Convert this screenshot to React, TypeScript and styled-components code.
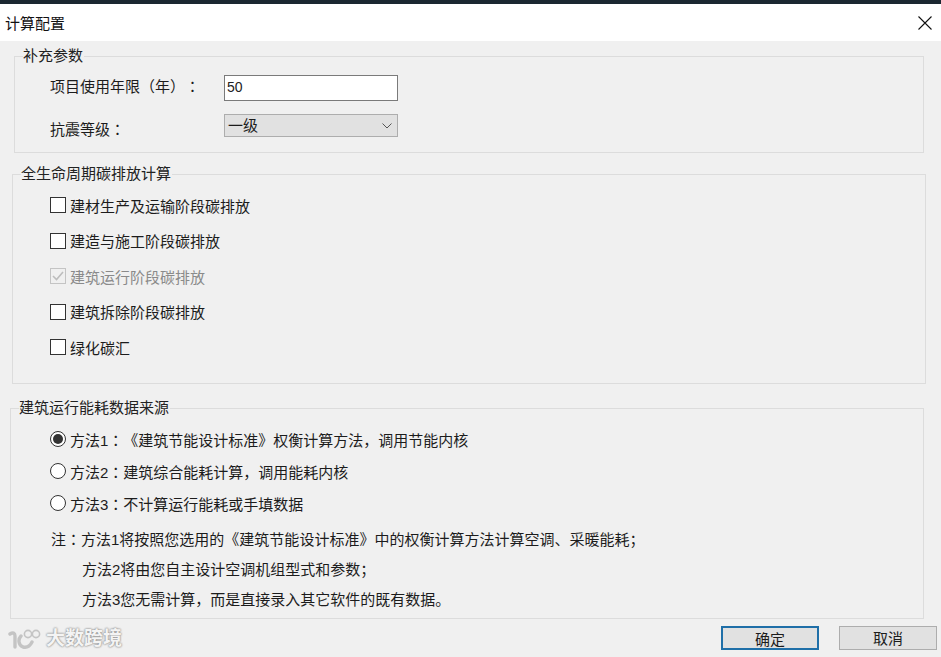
import styled, { createGlobalStyle } from "styled-components";

const GlobalStyle = createGlobalStyle`
  html, body {
    margin: 0;
    padding: 0;
    background: #f0f0f0;
  }
  body {
    font-family: "Liberation Sans", "Noto Sans CJK SC", sans-serif;
    font-size: 15px;
    color: #1c1c1c;
    text-spacing-trim: space-all;
  }
`;

const Dialog = styled.div`
  position: relative;
  width: 941px;
  height: 657px;
  overflow: hidden;
  background: #f0f0f0;
  border-top: 4px solid #1b2731;
  box-sizing: border-box;
`;

const TitleBar = styled.header`
  height: 37px;
  background: #fff;
  display: flex;
  align-items: center;
  justify-content: space-between;
  padding: 0 9px 0 5px;
`;

const Title = styled.h1`
  margin: 0;
  font-size: 15px;
  font-weight: 400;
  color: #111;
`;

const Close = styled.svg`
  width: 14px;
  height: 14px;
`;

const Group = styled.fieldset<{ $left: number; $right: number; $top: number; $height: number }>`
  margin: ${(p) => p.$top}px ${(p) => p.$right}px 0 ${(p) => p.$left}px;
  height: ${(p) => p.$height}px;
  padding: 0;
  border: 1px solid #dcdcdc;
  box-sizing: border-box;
  min-width: 0;
`;

const Legend = styled.legend<{ $inset: number }>`
  margin-left: ${(p) => p.$inset}px;
  padding: 0 1px 0 0;
  line-height: 20px;
  color: #222;
`;

const FormRow = styled.div<{ $top: number; $height: number }>`
  display: flex;
  align-items: center;
  height: ${(p) => p.$height}px;
  margin-top: ${(p) => p.$top}px;
  padding-left: 36px;
`;

const FieldLabel = styled.label<{ $shift: number }>`
  width: 173px;
  flex: none;
  padding-top: ${(p) => Math.max(p.$shift, 0)}px;
  padding-bottom: ${(p) => Math.max(-p.$shift, 0)}px;
  margin-left: -1px;
  margin-right: 1px;
`;

const TextInput = styled.input`
  width: 174px;
  height: 26px;
  box-sizing: border-box;
  border: 1px solid #7a7a7a;
  background: #fff;
  padding: 0 2px 2px;
  font: inherit;
  font-size: 14px;
  color: #222;
  outline: none;
`;

const SelectBox = styled.div`
  width: 174px;
  height: 23px;
  box-sizing: border-box;
  border: 1px solid #adadad;
  background: #e1e1e1;
  display: flex;
  align-items: center;
  justify-content: space-between;
  padding: 0 5px 3px 3px;
`;

const Chevron = styled.svg`
  width: 10px;
  height: 6px;
  margin-top: 3px;
`;

const OptionList = styled.div<{ $top: number; $gap: number; $left: number }>`
  display: flex;
  flex-direction: column;
  gap: ${(p) => p.$gap}px;
  padding: ${(p) => p.$top}px 0 0 ${(p) => p.$left}px;
`;

const Option = styled.label<{ $disabled?: boolean }>`
  height: 20px;
  display: flex;
  align-items: center;
  gap: 4px;
  color: ${(p) => (p.$disabled ? "#8a8a8a" : "#1c1c1c")};
`;

const CheckBox = styled.span<{ $disabled?: boolean }>`
  width: 16px;
  height: 16px;
  box-sizing: border-box;
  flex: none;
  background: ${(p) => (p.$disabled ? "#f0f0f0" : "#fff")};
  border: 1px solid ${(p) => (p.$disabled ? "#c4c4c4" : "#333")};
  display: flex;
  align-items: center;
  justify-content: center;
`;

const Tick = styled.svg`
  width: 12px;
  height: 10px;
`;

const Radio = styled.span<{ $checked?: boolean }>`
  width: 16px;
  height: 16px;
  box-sizing: border-box;
  flex: none;
  border-radius: 50%;
  border: 1px solid #333;
  background: #fff;
  display: flex;
  align-items: center;
  justify-content: center;
  &::after {
    content: "";
    display: ${(p) => (p.$checked ? "block" : "none")};
    width: 10px;
    height: 10px;
    border-radius: 50%;
    background: #333;
  }
`;

const Notes = styled.div`
  margin: 16px 0 0 40px;
  display: flex;
  flex-direction: column;
  gap: 10px;
`;

const NoteLine = styled.p<{ $indent?: boolean }>`
  margin: 0;
  line-height: 20px;
  padding-left: ${(p) => (p.$indent ? 31 : 0)}px;
  white-space: nowrap;
`;

const Colon = styled.span`
  font-family: "Noto Sans CJK JP", sans-serif;
`;

const Footer = styled.footer`
  display: flex;
  justify-content: flex-end;
  gap: 20px;
  padding: 7px 4px 0 0;
`;

const Button = styled.button<{ $primary?: boolean }>`
  width: 98px;
  height: 24px;
  box-sizing: border-box;
  padding: 0 0 3px;
  background: #e1e1e1;
  border: ${(p) => (p.$primary ? "2px solid #1f6fa8" : "1px solid #adadad")};
  font: inherit;
  color: #1c1c1c;
`;

const Watermark = styled.div`
  position: absolute;
  left: 8px;
  bottom: 6px;
  display: flex;
  align-items: center;
  gap: 3px;
`;

const WatermarkText = styled.span`
  font-size: 19px;
  font-weight: 700;
  color: #f4f4f4;
  text-shadow: 0 0 2px #8f8f8f, 0 0 2px #8f8f8f;
  line-height: 24px;
`;

const Logo = styled.svg`
  width: 35px;
  height: 24px;
`;

const lifecycleItems = [
  { text: "建材生产及运输阶段碳排放" },
  { text: "建造与施工阶段碳排放" },
  { text: "建筑运行阶段碳排放", disabled: true },
  { text: "建筑拆除阶段碳排放" },
  { text: "绿化碳汇" },
];

const sourceItems = [
  { text: "《建筑节能设计标准》权衡计算方法，调用节能内核", name: "方法1", checked: true },
  { text: "建筑综合能耗计算，调用能耗内核", name: "方法2" },
  { text: "不计算运行能耗或手填数据", name: "方法3" },
];

function App() {
  return (
    <>
      <GlobalStyle />
      <Dialog>
        <TitleBar>
          <Title>计算配置</Title>
          <Close viewBox="0 0 14 14">
            <path d="M.5.5l13 13M13.5.5l-13 13" stroke="#111" strokeWidth="1.1" fill="none" />
          </Close>
        </TitleBar>

        <Group $left={14} $right={17} $top={5} $height={107}>
          <Legend $inset={8}>补充参数</Legend>
          <FormRow $top={9} $height={26}>
            <FieldLabel $shift={-5}>
              项目使用年限（年）<Colon>：</Colon>
            </FieldLabel>
            <TextInput defaultValue="50" />
          </FormRow>
          <FormRow $top={13} $height={23}>
            <FieldLabel $shift={5}>
              抗震等级<Colon>：</Colon>
            </FieldLabel>
            <SelectBox>
              一级
              <Chevron viewBox="0 0 10 6">
                <path d="M.5.5L5 5 9.5.5" stroke="#555" fill="none" />
              </Chevron>
            </SelectBox>
          </FormRow>
        </Group>

        <Group $left={12} $right={15} $top={11} $height={220}>
          <Legend $inset={8}>全生命周期碳排放计算</Legend>
          <OptionList $top={11} $gap={15.5} $left={37}>
            {lifecycleItems.map((item) => (
              <Option key={item.text} $disabled={item.disabled}>
                <CheckBox $disabled={item.disabled}>
                  {item.disabled && (
                    <Tick viewBox="0 0 12 10">
                      <path d="M1 5l3.5 3.5L11 1" stroke="#bdbdbd" strokeWidth="1.6" fill="none" />
                    </Tick>
                  )}
                </CheckBox>
                {item.text}
              </Option>
            ))}
          </OptionList>
        </Group>

        <Group $left={10} $right={17} $top={14} $height={221}>
          <Legend $inset={8}>建筑运行能耗数据来源</Legend>
          <OptionList $top={11} $gap={12} $left={39}>
            {sourceItems.map((item) => (
              <Option key={item.name}>
                <Radio $checked={item.checked} />
                <span>
                  {item.name}
                  <Colon>：</Colon>
                  {item.text}
                </span>
              </Option>
            ))}
          </OptionList>
          <Notes>
            <NoteLine>
              注<Colon>：</Colon>方法1将按照您选用的《建筑节能设计标准》中的权衡计算方法计算空调、采暖能耗；
            </NoteLine>
            <NoteLine $indent>方法2将由您自主设计空调机组型式和参数；</NoteLine>
            <NoteLine $indent>方法3您无需计算，而是直接录入其它软件的既有数据。</NoteLine>
          </Notes>
        </Group>

        <Footer>
          <Button $primary>确定</Button>
          <Button>取消</Button>
        </Footer>

        <Watermark>
          <Logo viewBox="0 0 35 24">
            <path
              d="M2 7c3-2 5-1 5 2v11M13 9c-3 3-3 9 2 11 4 1 7-1 9-5"
              stroke="#c4c4c4"
              strokeWidth="3.4"
              fill="none"
              strokeLinecap="round"
            />
            <circle cx="20" cy="7" r="3.6" stroke="#c4c4c4" strokeWidth="1.6" fill="none" />
            <circle cx="28" cy="7" r="3.6" stroke="#c4c4c4" strokeWidth="1.6" fill="none" />
          </Logo>
          <WatermarkText>大数跨境</WatermarkText>
        </Watermark>
      </Dialog>
    </>
  );
}

export default App;
